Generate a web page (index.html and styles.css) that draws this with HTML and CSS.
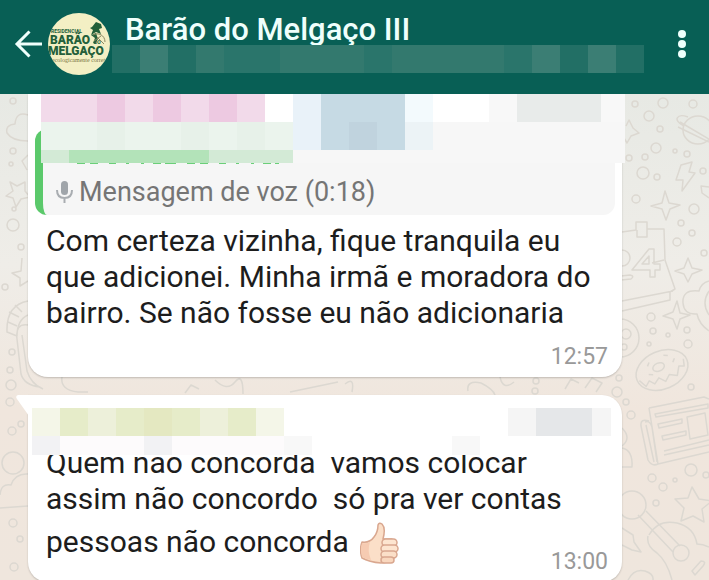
FILE: index.html
```html
<!DOCTYPE html>
<html lang="pt-BR">
  <head>
    <meta charset="UTF-8" />
    <meta name="viewport" content="width=device-width, initial-scale=1.0" />
    <title>Barão do Melgaço III</title>
    <link rel="stylesheet" href="styles.css">
  </head>
  <body>
    <header class="topbar">
      <a href="#" class="back" aria-label="Voltar">
        <svg width="30" height="30" viewBox="0 0 30 30" fill="none" stroke="currentColor" stroke-width="3">
          <path d="M28 15H3M15.500 2.500L3 15l12.500 12.500" />
        </svg>
      </a>
      <svg class="avatar" width="62" height="62" viewBox="0 0 62 62" role="img" aria-label="Barão do Melgaço">
        <defs>
          <clipPath id="round"><circle cx="31" cy="31" r="31" /></clipPath>
        </defs>
        <g clip-path="url(#round)">
          <rect width="62" height="62" fill="#f3efc4" />
          <g fill="#235f3a">
            <path d="M44 14l4-5 5 2 1 4-3 1 2 5-5-2-5 3 2-5-3-2z" />
            <path d="M48 20l2 6-3 5-2-1 2-5-4-3z" />
            <text class="logo-tiny" x="3" y="20">RESIDENCIAL</text>
            <text class="logo-name" x="2" y="31">BARÃO</text>
            <text class="logo-tiny" x="46" y="31">DO</text>
            <text class="logo-name" x="0" y="42">MELGAÇO</text>
          </g>
          <path d="M45 22c5-3 12 0 12 7M49 24l7 7M46 28l7-5" fill="none" stroke="#8b8963" />
          <text class="logo-slogan" x="4" y="49">ecologicamente correto</text>
        </g>
      </svg>
      <div class="group">
        <h1>Barão do Melgaço III</h1>
        <svg class="members" width="532" height="28" viewBox="0 0 19 1" preserveAspectRatio="none" shape-rendering="crispEdges">
          <rect width="19" height="1" fill="#2a756b" />
          <path fill="#226f65" d="M0 0h1v1H0zM2 0h1v1H2zM16 0h1v1h-1zM18 0h1v1h-1z" />
          <path fill="#33796e" d="M3 0h1v1H3zM6 0h3v1H6zM10 0h4v1h-4z" />
          <path fill="#3b7e74" d="M1 0h1v1H1zM15 0h1v1h-1zM17 0h1v1h-1z" />
        </svg>
      </div>
      <button class="menu" aria-label="Mais opções">
        <svg width="10" height="30" viewBox="0 0 10 30" fill="currentColor">
          <circle cx="5" cy="5" r="4" />
          <circle cx="5" cy="15" r="4" />
          <circle cx="5" cy="25" r="4" />
        </svg>
      </button>
    </header>

    <main class="chat">
      <!-- wallpaper doodles -->
      <svg class="wallpaper" viewBox="0 94 709 486" preserveAspectRatio="xMaxYMin slice" fill="none" stroke="#dcd8d1" stroke-width="1.500" stroke-linejoin="round">
        <g>
          <circle cx="635" cy="104" r="3" /><circle cx="663" cy="103" r="5" /><circle cx="693" cy="104" r="4" />
          <circle cx="649" cy="116" r="5" /><circle cx="660" cy="129" r="3" /><circle cx="656" cy="148" r="5" />
          <circle cx="675" cy="151" r="2" /><circle cx="687" cy="154" r="3" /><circle cx="629" cy="158" r="3" />
          <circle cx="645" cy="157" r="3" /><circle cx="643" cy="173" r="6" /><circle cx="657" cy="177" r="3" />
          <circle cx="703" cy="171" r="3" /><circle cx="636" cy="199" r="4" /><circle cx="694" cy="209" r="5" />
          <circle cx="681" cy="223" r="3" /><circle cx="692" cy="233" r="3" /><circle cx="677" cy="242" r="4" />
          <circle cx="704" cy="253" r="3" /><circle cx="651" cy="317" r="4" /><circle cx="653" cy="331" r="3" />
          <circle cx="687" cy="330" r="3" /><circle cx="668" cy="335" r="2" /><circle cx="688" cy="344" r="4" />
          <circle cx="649" cy="344" r="2" /><circle cx="619" cy="378" r="3" /><circle cx="617" cy="392" r="5" />
          <circle cx="626" cy="402" r="3" /><circle cx="631" cy="415" r="4" /><circle cx="691" cy="387" r="3" />
          <circle cx="691" cy="470" r="6" /><circle cx="652" cy="478" r="4" /><circle cx="675" cy="480" r="2" />
          <circle cx="663" cy="487" r="4" /><circle cx="656" cy="503" r="3" /><circle cx="706" cy="475" r="3" />
        </g>
        <ellipse cx="698" cy="130" rx="15" ry="14" />
        <path d="M684 126c-12-6-7-13 4-9M680 122l29 17M678 127l31 15" />
        <path d="M626 126l3-6 4 8 6 5-8 3-4 7-3-5M681 165l11-3-3 10 6 1-13 18 1-11h-7zM709 187l-8-1 1 7 7 5" />
        <path d="M665 191l4 12 11 2-10 4-4 11-4-11-11-3 11-3zM688 258l4 10 10 2-10 4-4 8-4-8-9-3 9-3zM677 301l3 12 10 2-10 4-3 10-4-10-10-3 10-4z" />
        <path d="M622 232l14-2v-8h11v7h17l1 31 10 29-5 3v8l-48 11M622 301l51-10M637 230v7h10v-8M664 260l-12 3M649 249l-17 21h18v7h5v-7h5v-6h-6v-15zM649 256v8h-7z" />
        <circle cx="622" cy="258" r="8" /><path d="M621 280l10-1q4-3-1-4l-9 1" />
        <path d="M709 281q-8 2-10 10-17-2-16 12 1 12 14 11 2 10 12 17M709 291q-8 12 0 24" />
        <circle cx="620" cy="338" r="19" /><circle cx="626" cy="334" r="5" /><circle cx="624" cy="347" r="3" />
        <g transform="rotate(-23 662 370)">
          <ellipse cx="662" cy="370" rx="27" ry="19" />
          <ellipse cx="660" cy="366" rx="6" ry="4" />
          <path d="M637 371l4 8 5-4 4 5 6-4 5 6 6-5 7 4 5-8 5 2 2-7M650 361l3-3M669 357l4 2M675 367l3-3M648 369l4 2" />
        </g>
        <path d="M649 408l55-11 5 2M649 408l9 56 51-12M649 421q-9-3-8 5l7 34q4 7 10 4M646 425l8 37M645 422q5-2 7 5l5 35" />
        <path d="M655 414l53-10v4l-52 9zM658 424l24-5v4l-23 5zM662 436l24-5v4l-23 5zM664 451l45-11M664 455l45-10M687 417l18-4 3 22-18 4z" />
        <path d="M692 487l7 12 13 2-10 8 2 13-11-6-12 5 3-13-9-9 13-1z" />
        <circle cx="632" cy="505" r="14" /><circle cx="681" cy="553" r="8" />
        <path d="M638 515l35 37M646 511l34 35M649 535q9-16 28-12 17 4 20 21 6 0 12 3M648 536q-2 10 9 17 10 8 15 27M622 528l11 7 1 7 7 10-9-2-10-5M692 571l9-10q6 0 2 5l-8 9zM628 580q6-12 17-9 9 3 8 9" />
        <path d="M622 428q10 10 0 18M622 448q11 2 10 19h-10" />
        <!-- left edge -->
        <circle cx="13" cy="101" r="3" /><circle cx="13" cy="151" r="3" /><circle cx="11" cy="164" r="2" />
        <circle cx="13" cy="225" r="6" /><circle cx="21" cy="247" r="3" /><circle cx="5" cy="287" r="3" />
        <circle cx="14" cy="209" r="2" /><circle cx="12" cy="352" r="3" /><circle cx="10" cy="370" r="3" />
        <circle cx="11" cy="385" r="5" /><circle cx="10" cy="402" r="4" /><circle cx="12" cy="431" r="4" />
        <circle cx="21" cy="424" r="3" /><circle cx="13" cy="463" r="11" /><circle cx="13" cy="523" r="4" />
        <circle cx="20" cy="539" r="3" /><circle cx="14" cy="567" r="4" />
        <path d="M28 115q-12-4-13 9-10 1-8 9 5 8 21 8M10 182l7 4 8-4v9l5 6-9 2-5 8-3-9-7-2 7-5zM28 155l-6 6 5 9M22 258l-1 13-9 2 8 5v8l8-5M28 301q-22 4-21 31l10 4q0-16 11-21M9 312l10 5M15 305l7 7M8 322l9 4M28 325q-13-2-11 14l4 35q3 11 19 13M22 335l5 36q4 13 16 18M0 495q1-12 11-10 4-12 17-11M0 508l28-2" />
        <!-- gap between bubbles -->
        <path d="M62 377q-2 13 16 15h10M185 393l6-8 8 4M215 380q12 12 20 2 8-10 8 12M290 392l48-10M345 384q10-8 7 8M468 391q-2-11 13-8 12 6 14 12M500 377q3 14 14 5M565 389l6-10 8 4M585 388l7-10 10 5-6 9" />
        <circle cx="536" cy="381" r="3" /><circle cx="535" cy="391" r="3" />
      </svg>

      <article class="bubble">
        <div class="quote">
          <svg class="mic" width="18" height="24" viewBox="0 0 18 24">
            <rect x="6" y="1" width="7" height="14" rx="3.500" fill="#a0a5aa" />
            <path d="M2 10q0 8 7.500 8T17 10M9.500 18v5" fill="none" stroke="#a9adb1" stroke-width="2" />
          </svg>
          <span>Mensagem de voz (0:18)</span>
        </div>
        <svg class="mosaic mosaic-quote" width="584" height="71" viewBox="0 0 584 71" shape-rendering="crispEdges">
          <rect width="584" height="28" fill="#fff" />
          <rect y="28" width="584" height="41" fill="#f7f7f7" />
          <path fill="#f2daea" d="M0 0h224v28H0z" />
          <path fill="#edc9e1" d="M56 0h28v28H56zM112 0h28v28h-28zM168 0h28v28h-28z" />
          <path fill="#e9f2f9" d="M252 0h28v56h-28z" />
          <path fill="#c6dae4" d="M280 0h84v56h-84z" />
          <path fill="#c0d3de" d="M308 28h28v28h-28z" />
          <path fill="#f3fafd" d="M364 0h28v28h-28z" />
          <path fill="#ecf3f6" d="M364 28h28v28h-28z" />
          <path fill="#f8f8f8" d="M448 0h136v28H448z" />
          <path fill="#e8ebea" d="M476 0h84v28h-84z" />
          <path fill="#ebf4ed" d="M0 28h252v28H0z" />
          <path fill="#e7f1e9" d="M56 28h28v28H56zM140 28h28v28h-28zM196 28h28v28h-28z" />
          <path fill="#d3ead6" d="M0 56h252v13H0z" />
          <path fill="#b3e3b9" d="M28 56h140v13H28z" />
          <path stroke="#6bcf79" stroke-dasharray="8 5 8 11 7 10 3 12 3 9 8 4 11 11" d="M36 69.500h202" />
        </svg>
        <p class="text">Com certeza vizinha, fique tranquila eu<br>que adicionei. Minha irmã e moradora do<br>bairro. Se não fosse eu não adicionaria</p>
        <time class="time">12:57</time>
      </article>

      <article class="bubble incoming">
        <svg class="tail" width="13" height="22" viewBox="0 0 13 22">
          <path d="M13 0H2Q-1 1 1 4l12 17z" fill="#fff" />
        </svg>
        <p class="text">Quem não concorda&nbsp; vamos colocar<br>assim não concordo&nbsp; só pra ver contas<br>pessoas não concorda
          <svg class="emoji" width="40" height="42" viewBox="0 0 40 42" role="img" aria-label="polegar para cima" stroke="#d9a78f" stroke-width="1.500" stroke-linejoin="round">
            <path d="M2 20q8 1 12-5 4-5 4-12 1-3 4-1 4 4 1 15h9l2 19-5 4-8 1Q9 40 2 36q-3-8 0-16z" fill="#fbdfc8" />
            <path d="M2 21q5 1 8-1-3 8 1 18-5-1-9-3-2-8 0-14z" fill="#f6cbb2" stroke="none" />
            <rect x="22" y="17" width="15" height="7" rx="3.500" fill="#fde5d0" />
            <rect x="21" y="23" width="17" height="7" rx="3.500" fill="#fde5d0" />
            <rect x="21" y="29" width="16" height="7" rx="3.500" fill="#fbdfc8" />
            <rect x="21" y="35" width="13" height="6" rx="3" fill="#f9d7be" />
          </svg>
        </p>
        <svg class="mosaic mosaic-sender" width="580" height="47" viewBox="0 0 580 47" shape-rendering="crispEdges">
          <rect width="580" height="47" fill="#fff" />
          <path fill="#f4f6e8" d="M0 0h252v28H0z" />
          <path fill="#e6ecc9" d="M28 0h196v28H28z" />
          <path fill="#edf0da" d="M56 0h28v28H56zM168 0h28v28h-28z" />
          <path fill="#e4e8c1" d="M112 0h28v28h-28z" />
          <path fill="#fdfbfc" d="M0 28h252v19H0z" />
          <path fill="#f2f2f4" d="M0 28h28v19H0zM112 28h28v19h-28z" />
          <path fill="#f8f8f8" d="M252 28h28v19h-28zM420 28h28v19h-28z" />
          <path fill="#f5f5f5" d="M476 0h103v28H476z" />
          <path fill="#e5e7e9" d="M504 0h56v28h-56z" />
        </svg>
        <time class="time">13:00</time>
      </article>
    </main>
  </body>
</html>
```

FILE: styles.css
```css
* {
  box-sizing: border-box;
}

body {
  margin: 0;
  height: 100vh;
  display: flex;
  flex-direction: column;
  font-family: Roboto, sans-serif;
  color: #1d1d1d;
}

.topbar {
  display: flex;
  align-items: center;
  height: 94px;
  padding: 0 22px 6px 14px;
  background: #085f55;
  color: #effffc;
  flex-shrink: 0;
}

.back,
.menu {
  display: flex;
  color: inherit;
}

.menu {
  padding: 0;
  border: none;
  background: none;
  cursor: pointer;
}

.avatar {
  flex-shrink: 0;
  margin-left: 4px;
}

.logo-name {
  font: 900 12px Roboto, sans-serif;
}

.logo-tiny {
  font: 700 5px Roboto, sans-serif;
}

.logo-slogan {
  font: 6px "Liberation Serif", serif;
  fill: #77733f;
}

.group {
  flex: 1;
  min-width: 0;
  padding-left: 2px;
}

.group h1 {
  margin: 0;
  padding-left: 13px;
  font-size: 31px;
  line-height: 30px;
  font-weight: 500;
  white-space: nowrap;
}

.members {
  display: block;
  max-width: 100%;
}

.chat {
  position: relative;
  flex: 1;
  overflow: hidden;
  padding: 0 87px 0 28px;
  background: linear-gradient(#e7e9e4, #efede8 35%, #f0e6dd 65%, #efe6dd);
}

.wallpaper {
  position: absolute;
  top: 0;
  left: 0;
  width: 100%;
  height: 100%;
}

.bubble {
  position: relative;
  padding: 14px 14px 8px 18px;
  margin-bottom: 18px;
  background: #fff;
  border-radius: 20px;
  box-shadow: 0 1px 2px rgba(0, 0, 0, 0.2);
}

.bubble:first-of-type {
  padding-top: 35px;
  border-top-left-radius: 0;
  border-top-right-radius: 0;
}

.incoming {
  padding-top: 50px;
  border-top-left-radius: 0;
}

.quote {
  display: flex;
  align-items: flex-end;
  gap: 6px;
  height: 86px;
  margin: 0 -7px 8px -11px;
  padding: 0 12px 8px;
  border-left: 8px solid #5bc96b;
  border-radius: 12px;
  background: #f6f6f6;
  color: #757575;
  font-size: 27px;
  line-height: 30px;
}

.mic {
  margin-bottom: 3px;
}

.text {
  margin: 0;
  font-size: 30px;
  line-height: 36px;
  white-space: nowrap;
}

.emoji {
  margin: 5px 0 0 4px;
  vertical-align: -12px;
}

.time {
  display: block;
  margin-top: 14px;
  color: #999;
  font-size: 23px;
  line-height: 24px;
  text-align: right;
}

.incoming .time {
  margin-top: -14px;
}

.mosaic {
  position: absolute;
}

.mosaic-quote {
  top: 0;
  left: 13px;
}

.mosaic-sender {
  top: 13px;
  left: 4px;
}

.tail {
  position: absolute;
  top: 0;
  left: -12px;
}
```
